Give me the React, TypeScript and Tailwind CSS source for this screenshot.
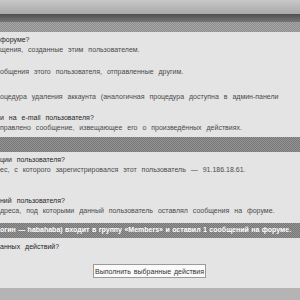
function Question({ text }: { text: string }) {
  return <p className="h-[10px] leading-[10px] text-[#262626] whitespace-nowrap">{text}</p>;
}

function Answer({ text }: { text: string }) {
  return <p className="h-[10px] leading-[10px] text-[#4a4a4a] whitespace-nowrap">{text}</p>;
}

function Band({ children }: { children?: React.ReactNode }) {
  return (
    <div className="h-[15px] flex items-center whitespace-nowrap text-white font-bold bg-[repeating-conic-gradient(#767676_0_25%,#959595_0_50%)] bg-[length:2px_2px]">
      {children}
    </div>
  );
}

export default function App() {
  return (
    <div className="w-[300px] h-[300px] overflow-hidden bg-[#e4e4e4] text-[7px] [word-spacing:3px] font-['Liberation_Sans',Arial,sans-serif]">
      {/* header stripes */}
      <div className="h-[14px] bg-gradient-to-b from-[#c8c8c8] to-[#a9a9a9]" />
      <div className="h-[8px] bg-gradient-to-b from-[#505050] to-[#767676]" />
      <div className="h-[10px] bg-[repeating-conic-gradient(#8e8e8e_0_25%,#a6a6a6_0_50%)] bg-[length:2px_2px]" />

      <div className="pt-[3px]">
        <Question text="форуме?" />
        <Answer text="щения, созданные этим пользователем." />
        <div className="h-[12px]" />
        <Answer text="общения этого пользователя, отправленные другим." />
        <div className="h-[15px]" />
        <Answer text="оцедура удаления аккаунта (аналогичная процедура доступна в админ-панели" />
        <div className="h-[11px]" />
        <Question text="и на e-mail пользователя?" />
        <Answer text="правлено сообщение, извещающее его о произведённых действиях." />
      </div>

      <div className="mt-[4px]">
        <Band />
      </div>

      <div className="pt-[3px]">
        <Question text="ции пользователя?" />
        <Answer text="ес, с которого зарегистрировался этот пользователь — 91.186.18.61." />
        <div className="h-[21px]" />
        <Question text="ний пользователя?" />
        <Answer text="дреса, под которыми данный пользователь оставлял сообщения на форуме." />
      </div>

      <div className="mt-[7px]">
        <Band>
          <span className="text-[7px] [word-spacing:0.5px]">огин — habahaba) входит в группу «Members» и оставил 1 сообщений на форуме.</span>
        </Band>
      </div>

      <div className="pt-[4px]">
        <Question text="анных действий?" />
      </div>

      <div className="mt-[12px] flex">
        <button className="ml-[93px] w-[113px] h-[14px] bg-[#fafafa] border border-[#9a9a9a] text-[#333] text-[7px] leading-none [word-spacing:1px]">
          Выполнить выбранные действия
        </button>
      </div>

      <div className="mt-[10px] h-[12px] bg-[#b4b4b4]" />
    </div>
  );
}
